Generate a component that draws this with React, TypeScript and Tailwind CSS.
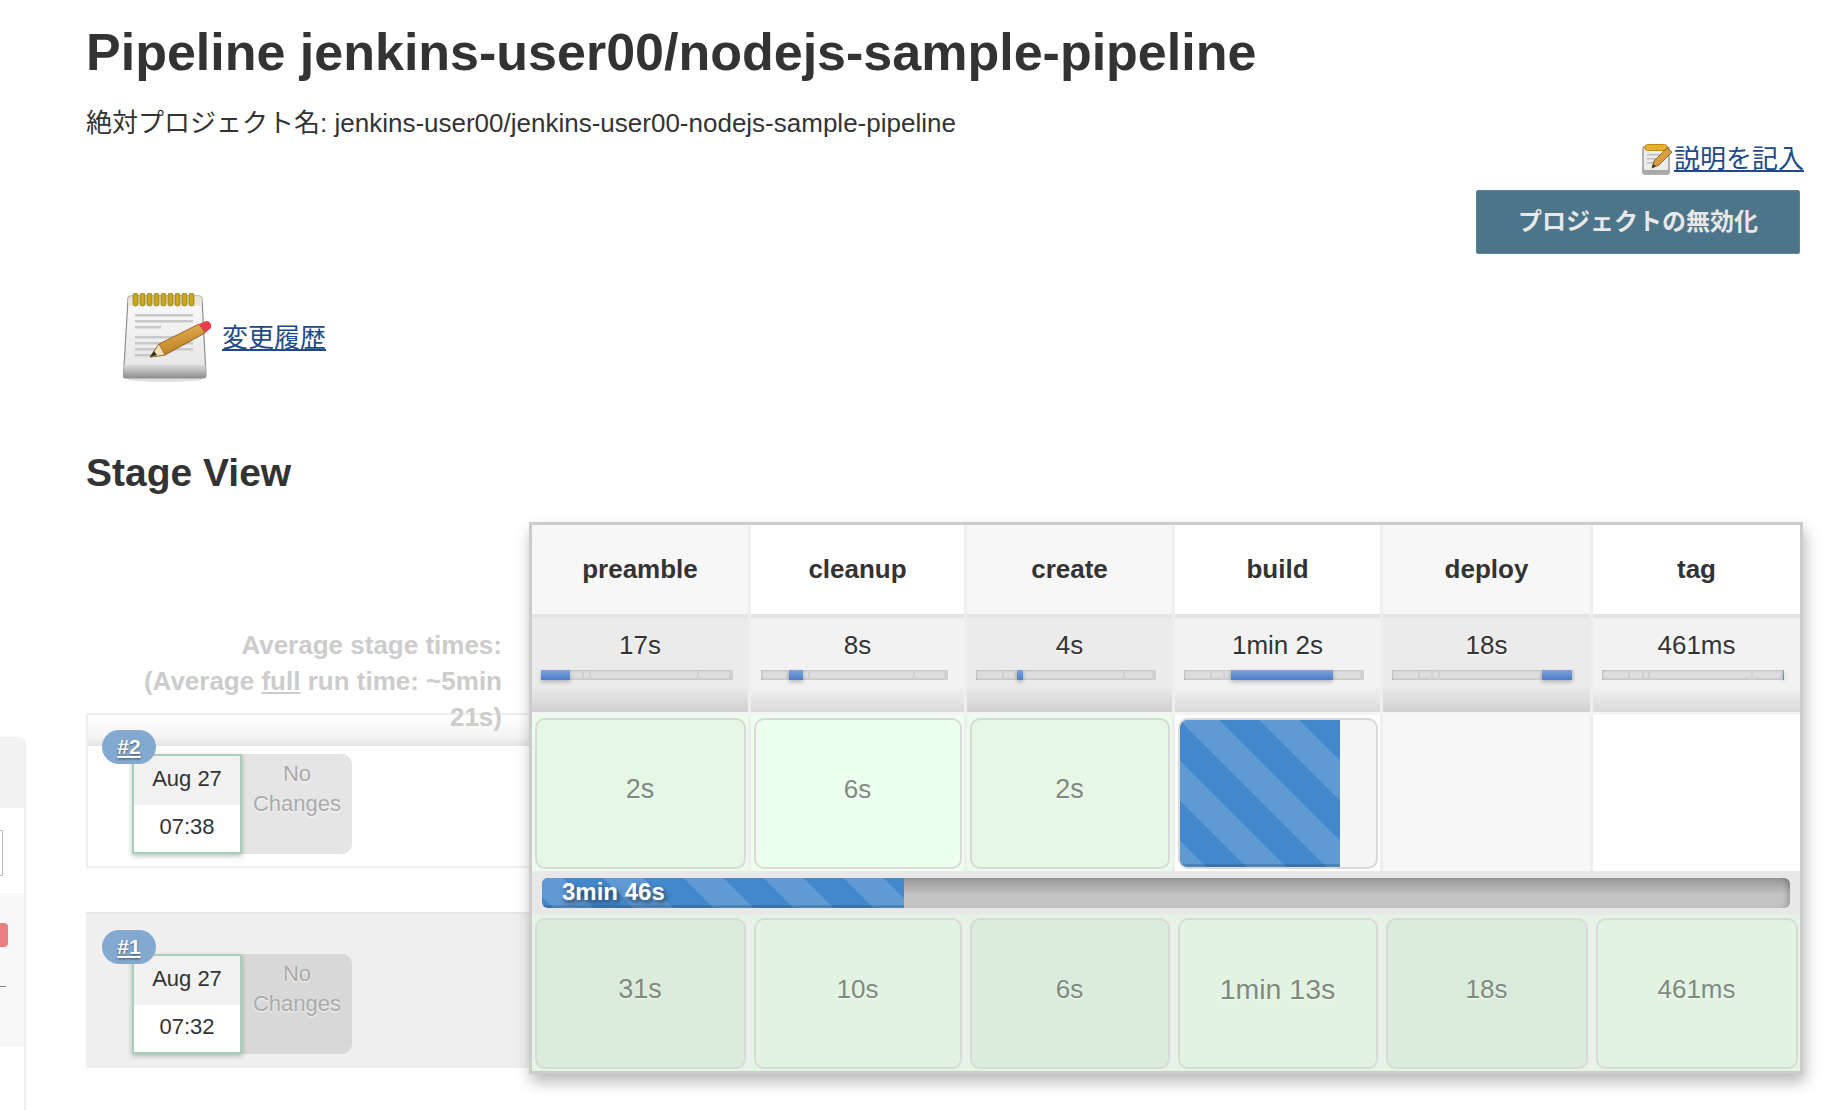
const gridCols = 'grid grid-cols-[216px_213px_205px_205px_207px_207px] gap-x-[3px]';

const stages = [
  { name: 'preamble', avg: '17s', secs: 17, barWidth: 'w-[192px]' },
  { name: 'cleanup', avg: '8s', secs: 8, barWidth: 'w-[187px]' },
  { name: 'create', avg: '4s', secs: 4, barWidth: 'w-[180px]' },
  { name: 'build', avg: '1min 2s', secs: 62, barWidth: 'w-[180px]' },
  { name: 'deploy', avg: '18s', secs: 18, barWidth: 'w-[182px]' },
  { name: 'tag', avg: '461ms', secs: 0.46, barWidth: 'w-[182px]' },
];
const totalSecs = stages.reduce((sum, s) => sum + s.secs, 0);

const stripes =
  'bg-[#4488cc] bg-[linear-gradient(45deg,#5f9ad4_25%,transparent_25%,transparent_50%,#5f9ad4_50%,#5f9ad4_75%,transparent_75%,transparent)] bg-[length:80px_80px]';

const Notepad = ({ className }: { className: string }) => (
  <svg viewBox="0 0 90 90" className={className}>
    <defs>
      <linearGradient id="pad-body" x1="0" y1="0" x2="0" y2="1">
        <stop offset="0" stopColor="#fafafa" />
        <stop offset="1" stopColor="#e4e4e4" />
      </linearGradient>
      <linearGradient id="pad-foot" x1="0" y1="0" x2="0" y2="1">
        <stop offset="0" stopColor="#dcdcdc" />
        <stop offset="1" stopColor="#8e8e8e" />
      </linearGradient>
      <linearGradient id="pencil" x1="0" y1="0" x2="0.4" y2="1">
        <stop offset="0" stopColor="#f0c060" />
        <stop offset="1" stopColor="#b87a1e" />
      </linearGradient>
    </defs>
    <ellipse cx="42" cy="86" rx="38" ry="3" fill="#000" opacity="0.12" />
    <path d="M5 6 Q5 3 8 3 H76 Q79 3 79 6 L83 82 Q83 85 80 85 H3 Q0 85 0.5 82 Z" fill="url(#pad-body)" stroke="#8f8f8f" strokeWidth="1.2" />
    <path d="M1 72 H82.5 L83 82 Q83 85 80 85 H3 Q0 85 0.5 82 Z" fill="url(#pad-foot)" />
    <path d="M5 5 Q5 3 8 3 H76 Q79 3 79 5 V13 H5 Z" fill="#e6e2cf" opacity="0.8" />
    {[10, 17, 24, 31, 38, 45, 52, 59, 66].map(x => (
      <rect key={x} x={x} y="0" width="5" height="13" rx="2.4" fill="#c9a61f" stroke="#8b7410" strokeWidth="0.7" />
    ))}
    <g fill="#c8c8c8">
      <rect x="12" y="21" width="58" height="2.5" />
      <rect x="12" y="27" width="58" height="2.5" />
      <rect x="12" y="33" width="26" height="2.5" />
      <rect x="12" y="43" width="58" height="2.5" />
      <rect x="12" y="49" width="58" height="2.5" />
      <rect x="12" y="55" width="58" height="2.5" />
      <rect x="12" y="61" width="22" height="2.5" />
    </g>
    <path d="M27 64 L36 51 L76 31 L82 40 L42 62 Z" fill="url(#pencil)" stroke="#7b5414" strokeWidth="0.8" />
    <path d="M27 64 L36 51 L42 62 Z" fill="#f3dfb6" stroke="#7b5414" strokeWidth="0.6" />
    <path d="M27 64 L31 58 L34 62 Z" fill="#3a3024" />
    <path d="M76 31 L83 28 Q89 28 88 35 L82 40 Z" fill="#e8404a" />
  </svg>
);

const SmallNotepad = () => (
  <svg viewBox="0 0 31 31" className="w-[31px] h-[31px] mr-[1px]">
    <rect x="1" y="3" width="26" height="27" rx="1.5" fill="#ececec" stroke="#9a9a9a" strokeWidth="1.5" />
    <rect x="1" y="26" width="26" height="4" fill="#a8a8a8" />
    <rect x="3" y="0.5" width="22" height="6" rx="2.5" fill="#e6b12e" stroke="#c08a14" />
    <g fill="#bdbdbd">
      <rect x="5" y="10" width="17" height="1.5" />
      <rect x="5" y="14" width="12" height="1.5" />
      <rect x="5" y="18" width="8" height="1.5" />
    </g>
    <path d="M10 24 L12 17 L25 4 L30 8 L17 21 Z" fill="#d89f3e" stroke="#7b5414" strokeWidth="0.8" />
    <path d="M10 24 L11 20 L14 22 Z" fill="#3a3024" />
  </svg>
);

const Sidebar = () => (
  <div className="w-[26px] mt-[737px] shrink-0 flex flex-col border-t border-r-2 border-[#eeeeee] rounded-tr-lg">
    <div className="h-[70px] bg-[#f2f2f2] rounded-tr-lg" />
    <div className="h-[22px]" />
    <div className="h-[46px] w-[3px] border border-l-0 border-[#bbbbbb]" />
    <div className="h-[17px]" />
    <div className="h-[154px] bg-[#f8f8f8] flex flex-col pt-[30px]">
      <div className="h-[24px] w-[8px] bg-[#e88080] rounded-r-sm" />
      <div className="h-px w-[6px] bg-[#888888] mt-[39px]" />
    </div>
  </div>
);

const BuildRow = ({ num, date, time, shaded }: { num: string; date: string; time: string; shaded?: boolean }) => (
  <div className={shaded ? 'relative h-[156px] border-t-2 border-[#e6e6e6] bg-[#efefef] pt-[40px] pl-[46px]' : 'relative h-[155px] border-2 border-r-0 border-[#eeeeee] bg-white'}>
    {!shaded && <div className="h-[31px] bg-[linear-gradient(to_bottom,#ffffff,#f4f4f4_70%,#e4e4e4)] mb-[8px]" />}
    <a className={shaded ? 'absolute left-[16px] top-[16px] z-10 w-[54px] h-[34px] rounded-[17px] bg-[#83a9d0] text-white font-bold text-[21px] leading-[34px] text-center underline [text-shadow:0_1px_2px_rgba(0,0,0,0.5)]' : 'absolute left-[14px] top-[15px] z-10 w-[54px] h-[34px] rounded-[17px] bg-[#83a9d0] text-white font-bold text-[21px] leading-[34px] text-center underline [text-shadow:0_1px_2px_rgba(0,0,0,0.5)]'}>
      {num}
    </a>
    <div className={shaded ? 'flex w-[220px] h-[100px]' : 'flex w-[220px] h-[100px] ml-[44px]'}>
      <div className="w-[110px] border-2 border-[#a8d0b8] shadow-[0_2px_5px_rgba(0,0,0,0.25)] text-[#333333] text-[22px] text-center z-[1]">
        <div className="h-[49px] leading-[44px] bg-[#f1f1f1] pt-px">{date}</div>
        <div className="h-[47px] leading-[44px] bg-white">{time}</div>
      </div>
      <div className={shaded ? 'flex-1 rounded-r-[10px] bg-[#d8d8d8] text-center text-[22px] leading-[30px] text-[#aaaaaa] pt-[5px] [text-shadow:0_1px_2px_rgba(255,255,255,0.9)]' : 'flex-1 rounded-r-[10px] bg-[#e5e5e5] text-center text-[22px] leading-[30px] text-[#aaaaaa] pt-[5px] [text-shadow:0_1px_2px_rgba(255,255,255,0.9)]'}>
        No
        <br />
        Changes
      </div>
    </div>
  </div>
);

const Cell = ({ text, holder, box, size = 'text-[26px]' }: { text: string; holder: string; box: string; size?: string }) => (
  <div className={`${holder} h-[156px] px-[2.5px] pt-[3px] pb-[2px]`}>
    <div className={`${box} ${size} h-full rounded-[10px] border-2 border-[#d9d9d9] flex items-center justify-center text-[#7f8a7f] [text-shadow:0_1px_2px_rgba(255,255,255,0.7)] pb-[9px]`}>
      {text}
    </div>
  </div>
);

const App = () => (
  <div className="flex h-[1110px] overflow-hidden bg-white font-['Liberation_Sans','Noto_Sans_CJK_JP',sans-serif] text-[#333333]">
    <Sidebar />
    <main className="flex-1 pl-[60px] pr-[27px]">
      <h1 className="mt-[22px] text-[52px] leading-[60px] font-bold whitespace-nowrap">Pipeline jenkins-user00/nodejs-sample-pipeline</h1>
      <p className="mt-[23px] text-[26px] leading-[36px] whitespace-nowrap">絶対プロジェクト名: jenkins-user00/jenkins-user00-nodejs-sample-pipeline</p>
      <div className="flex justify-end items-center h-[34px] mt-[1px] -mr-px">
        <SmallNotepad />
        <a className="text-[26px] leading-[32px] text-[#204a87] underline">説明を記入</a>
      </div>
      <div className="flex justify-end mt-[14px] pr-[3px]">
        <button className="w-[324px] h-[64px] rounded-[2px] bg-[#4d758a] border border-[#5a8299] text-[24px] font-bold text-[#e8e8e8]">プロジェクトの無効化</button>
      </div>
      <div className="flex items-center mt-[39px] ml-[37px] h-[90px]">
        <Notepad className="w-[90px] h-[90px]" />
        <a className="ml-[9px] text-[26px] text-[#204a87] underline">変更履歴</a>
      </div>
      <h2 className="mt-[67px] text-[39px] leading-[46px] font-bold">Stage View</h2>

      <div className="flex mt-[26px] w-[1717px]">
        <div className="w-[443px] shrink-0">
          <div className="h-[191px] pt-[105px] pr-[27px] pl-[40px] text-right text-[26px] leading-[36px] font-bold text-[#cccccc] relative z-10">
            Average stage times:
            <br />
            (Average <span className="underline">full</span> run time: ~5min 21s)
          </div>
          <BuildRow num="#2" date="Aug 27" time="07:38" />
          <div className="h-[44px]" />
          <BuildRow num="#1" date="Aug 27" time="07:32" shaded />
        </div>

        <div className="w-[1274px] h-[552px] shrink-0 border-[3px] border-[#cccccc] bg-[#eeeeee] shadow-[2px_8px_14px_rgba(0,0,0,0.28)] relative z-20">
          <div className={gridCols}>
            {stages.map((s, i) => (
              <div key={s.name} className={i % 2 === 0 ? 'h-[93px] border-b-4 border-[#e4e4e4] bg-[#f7f7f7] flex items-center justify-center text-[26px] font-bold' : 'h-[93px] border-b-4 border-[#e4e4e4] bg-white flex items-center justify-center text-[26px] font-bold'}>
                {s.name}
              </div>
            ))}
          </div>
          <div className={gridCols}>
            {stages.map((s, i) => (
              <div key={s.name} className={i % 2 === 0 ? 'h-[94px] flex flex-col items-center pt-[12px] bg-[linear-gradient(to_bottom,#ebebeb_72%,#d0d0d0)]' : 'h-[94px] flex flex-col items-center pt-[12px] bg-[linear-gradient(to_bottom,#f2f2f2_72%,#dadada)]'}>
                <div className="text-[26px] leading-[30px] [text-shadow:0_1px_2px_rgba(255,255,255,0.9)]">{s.avg}</div>
                <div className={`${s.barWidth} h-[10px] mt-[10px] mr-[7px] flex bg-[#dedede] shadow-[inset_0_0_3px_rgba(0,0,0,0.3)]`}>
                  {stages.map(seg => (
                    <div
                      key={seg.name}
                      style={{ width: `${(seg.secs / totalSecs) * 100}%` }}
                      className={seg.name === s.name ? 'h-full bg-[linear-gradient(to_bottom,#7fa3dc,#4a7ccb)] shadow-[0_2px_4px_rgba(0,0,0,0.25)]' : 'h-full border-r-2 border-[#d0d0d0]'}
                    />
                  ))}
                </div>
              </div>
            ))}
          </div>
          <div className="h-[3px] bg-[#f4f4f4]" />
          <div className={gridCols}>
            <Cell text="2s" holder="bg-[#ecfceb]" box="bg-[#e6f7e5]" size="text-[27px]" />
            <Cell text="6s" holder="bg-[#edffed]" box="bg-[#edffed]" />
            <Cell text="2s" holder="bg-[#ecfceb]" box="bg-[#e6f7e5]" size="text-[27px]" />
            <div className="h-[156px] px-[2.5px] pt-[3px] pb-[2px] bg-white">
              <div className="h-full rounded-[10px] border-2 border-[#d9d9d9] bg-[#f5f5f5] overflow-hidden">
                <div className={`${stripes} w-[160px] h-full shadow-[inset_0_-3px_0_rgba(0,0,0,0.15)]`} />
              </div>
            </div>
            <div className="h-[156px] bg-[#f7f7f7]" />
            <div className="h-[156px] bg-white" />
          </div>
          <div className="h-[44px] bg-[#e8e8e8] px-[10px] pt-[7px]">
            <div className="h-[30px] rounded-[6px] overflow-hidden bg-[linear-gradient(to_bottom,#969696,#c4c4c4_55%)] shadow-[inset_-6px_0_6px_-4px_rgba(0,0,0,0.25)]">
              <div className={`${stripes} bg-[position:-18px_0] w-[362px] h-full pl-[20px] text-[24px] leading-[28px] font-bold text-white shadow-[inset_0_-3px_0_rgba(0,0,0,0.15)] [text-shadow:2px_3px_5px_rgba(0,0,0,0.6)]`}>
                3min 46s
              </div>
            </div>
          </div>
          <div className={gridCols}>
            <Cell text="31s" holder="bg-[#e3f4e2]" box="bg-[#dcecdc]" size="text-[27px]" />
            <Cell text="10s" holder="bg-[#e3f4e2]" box="bg-[#e2f3e2]" />
            <Cell text="6s" holder="bg-[#e3f4e2]" box="bg-[#dcecdc]" />
            <Cell text="1min 13s" holder="bg-[#e3f4e2]" box="bg-[#e2f3e2]" size="text-[28.5px]" />
            <Cell text="18s" holder="bg-[#e3f4e2]" box="bg-[#dcecdc]" />
            <Cell text="461ms" holder="bg-[#e3f4e2]" box="bg-[#e2f3e2]" />
          </div>
        </div>
      </div>
    </main>
  </div>
);

export default App;
